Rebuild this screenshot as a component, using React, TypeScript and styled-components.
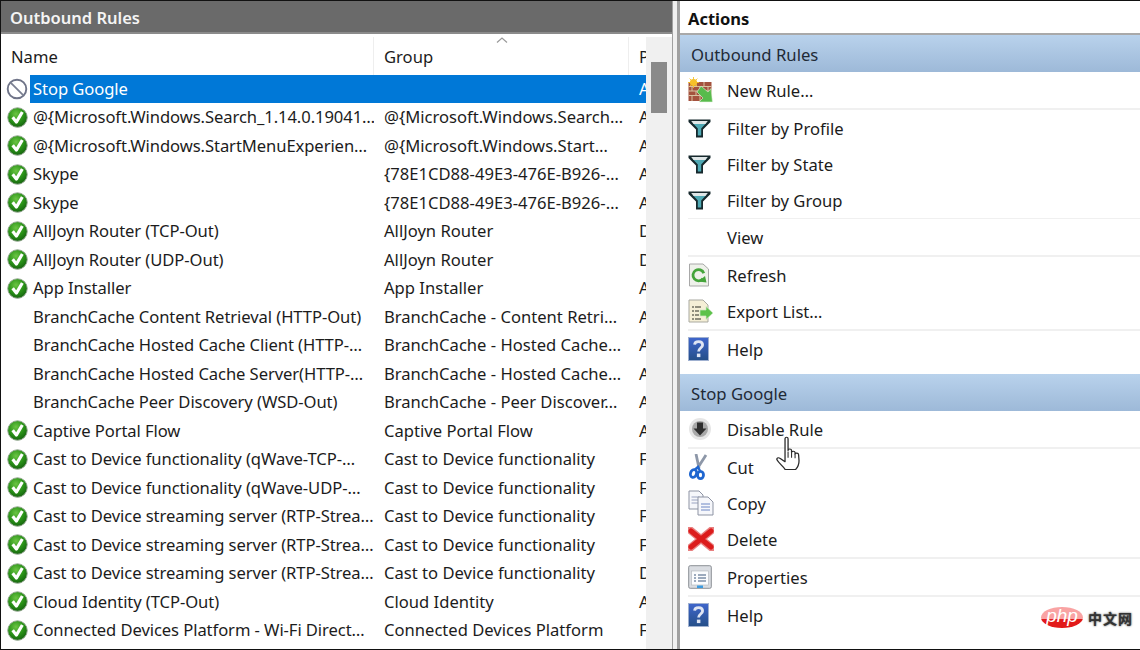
import React from 'react';
import { styled, createGlobalStyle } from 'styled-components';

type Status = 'on' | 'off' | 'none';

interface Rule {
	name: string;
	group: string;
	col: string;
	status: Status;
}

const rules: Rule[] = [
	{ name: 'Stop Google', group: '', col: 'A', status: 'off' },
	{ name: '@{Microsoft.Windows.Search_1.14.0.19041…', group: '@{Microsoft.Windows.Search…', col: 'A', status: 'on' },
	{ name: '@{Microsoft.Windows.StartMenuExperien…', group: '@{Microsoft.Windows.Start…', col: 'A', status: 'on' },
	{ name: 'Skype', group: '{78E1CD88-49E3-476E-B926-…', col: 'A', status: 'on' },
	{ name: 'Skype', group: '{78E1CD88-49E3-476E-B926-…', col: 'A', status: 'on' },
	{ name: 'AllJoyn Router (TCP-Out)', group: 'AllJoyn Router', col: 'D', status: 'on' },
	{ name: 'AllJoyn Router (UDP-Out)', group: 'AllJoyn Router', col: 'D', status: 'on' },
	{ name: 'App Installer', group: 'App Installer', col: 'A', status: 'on' },
	{ name: 'BranchCache Content Retrieval (HTTP-Out)', group: 'BranchCache - Content Retri…', col: 'A', status: 'none' },
	{ name: 'BranchCache Hosted Cache Client (HTTP-…', group: 'BranchCache - Hosted Cache…', col: 'A', status: 'none' },
	{ name: 'BranchCache Hosted Cache Server(HTTP-…', group: 'BranchCache - Hosted Cache…', col: 'A', status: 'none' },
	{ name: 'BranchCache Peer Discovery (WSD-Out)', group: 'BranchCache - Peer Discover…', col: 'A', status: 'none' },
	{ name: 'Captive Portal Flow', group: 'Captive Portal Flow', col: 'A', status: 'on' },
	{ name: 'Cast to Device functionality (qWave-TCP-…', group: 'Cast to Device functionality', col: 'F', status: 'on' },
	{ name: 'Cast to Device functionality (qWave-UDP-…', group: 'Cast to Device functionality', col: 'F', status: 'on' },
	{ name: 'Cast to Device streaming server (RTP-Strea…', group: 'Cast to Device functionality', col: 'F', status: 'on' },
	{ name: 'Cast to Device streaming server (RTP-Strea…', group: 'Cast to Device functionality', col: 'F', status: 'on' },
	{ name: 'Cast to Device streaming server (RTP-Strea…', group: 'Cast to Device functionality', col: 'D', status: 'on' },
	{ name: 'Cloud Identity (TCP-Out)', group: 'Cloud Identity', col: 'A', status: 'on' },
	{ name: 'Connected Devices Platform - Wi-Fi Direct…', group: 'Connected Devices Platform', col: 'F', status: 'on' },
];

function CheckIcon() {
	return (
		<svg width='21' height='21' viewBox='0 0 20 20'>
			<defs>
				<radialGradient id='greenBall' cx='42%' cy='32%' r='72%'>
					<stop offset='0%' stopColor='#6cc544' />
					<stop offset='55%' stopColor='#2a9318' />
					<stop offset='100%' stopColor='#14600e' />
				</radialGradient>
			</defs>
			<circle cx='10' cy='10' r='9.3' fill='url(#greenBall)' stroke='#97a894' strokeWidth='0.9' />
			<path d='M5.4 9.8 L8.9 14.4 L14.6 4.8' fill='none' stroke='#fff' strokeWidth='3' strokeLinejoin='round' />
		</svg>
	);
}

function DisabledIcon() {
	return (
		<svg width='22' height='22' viewBox='0 0 22 22'>
			<circle cx='11' cy='11' r='9.3' fill='#fff' stroke='#6f7488' strokeWidth='1.9' />
			<path d='M4.6 4.6 L17.4 17.4' stroke='#7b8092' strokeWidth='1.8' />
		</svg>
	);
}

function BrickIcon() {
	return (
		<svg width='25' height='26' viewBox='0 0 25 26'>
			<rect x='0.5' y='5' width='23' height='19' fill='#a4523e' />
			<path d='M0.5 9.5h23M0.5 14h23M0.5 18.5h23M8 5v4.5M16 5v4.5M4 9.5v4.5M12 9.5v4.5M20 9.5v4.5M8 14v4.5M16 14v4.5M4 18.5v5.5M12 18.5v5.5' stroke='#d9c2a2' strokeWidth='1' />
			<circle cx='5.5' cy='5.5' r='3.6' fill='#f6c22a' />
			<path d='M5.5 0v11M0 5.5h11M1.6 1.6l7.8 7.8M9.4 1.6l-7.8 7.8' stroke='#f6c22a' strokeWidth='0.9' />
			<path d='M13 9 L20 15 L23 11.5 L24.5 25 L11 25 L15 21 L9 15 Z' fill='#58bb4c' stroke='#e8f5e2' strokeWidth='0.6' />
		</svg>
	);
}

function FunnelIcon() {
	return (
		<svg width='23' height='19' viewBox='0 0 23 19'>
			<path d='M0.5 0.5 H22.5 V3 L15 10.5 V18.5 H8 V10.5 L0.5 3 Z' fill='#16282c' />
			<path d='M4.5 3.8 H18.5 L13.2 9.4 V16.6 H9.8 V9.4 Z' fill='#4fa9b4' />
			<path d='M3.2 2 H19.8 L17.4 5 H5.6 Z' fill='#dfe6e7' />
		</svg>
	);
}

function RefreshIcon() {
	return (
		<svg width='22' height='24' viewBox='0 0 22 24'>
			<path d='M1.5 1 H15 L20.5 6 V23 H1.5 Z' fill='#eef1ea' stroke='#a8a8a8' />
			<path d='M15 15.6 A5.6 5.6 0 1 1 15.8 10.2' fill='none' stroke='#44a43a' strokeWidth='2.8' />
			<path d='M10.5 18.5 L18.5 19.5 L17 13 Z' fill='#44a43a' />
		</svg>
	);
}

function ExportIcon() {
	return (
		<svg width='26' height='26' viewBox='0 0 26 26'>
			<path d='M1 2 H15 L20 7 V24 H1 Z' fill='#f5efd6' stroke='#a9a9a0' />
			<path d='M4 9h9M4 13h7M4 17h7M4 21h9' stroke='#6f6f60' strokeWidth='1.4' strokeDasharray='2 1 6 0' />
			<path d='M12 12 H18 V8.5 L25 15 L18 21.5 V18 H12 Z' fill='#5cc24a' stroke='#cfe8c6' strokeWidth='0.7' />
		</svg>
	);
}

function HelpIcon() {
	return (
		<svg width='21' height='24' viewBox='0 0 21 24'>
			<defs>
				<linearGradient id='helpBlue' x1='0' y1='0' x2='0' y2='1'>
					<stop offset='0%' stopColor='#3f66cc' />
					<stop offset='100%' stopColor='#254f88' />
				</linearGradient>
			</defs>
			<rect x='0.5' y='0.5' width='20' height='23' fill='url(#helpBlue)' stroke='#9fb0d0' />
			<path d='M6.6 7.6 C6.8 3.6 14.6 3.4 14.6 8 C14.6 11 10.6 11 10.6 14.4' fill='none' stroke='#dfe5f3' strokeWidth='2.8' />
			<rect x='8.9' y='16.6' width='3.5' height='3.5' fill='#dfe5f3' />
		</svg>
	);
}

function DisableIcon() {
	return (
		<svg width='24' height='24' viewBox='0 0 24 24'>
			<circle cx='12' cy='12' r='11' fill='#e6e6e6' />
			<circle cx='12' cy='12' r='8' fill='#a8a8a8' />
			<path d='M9 5.5 H15 V11.5 H18.5 L12 18.5 L5.5 11.5 H9 Z' fill='#2e2e2e' />
		</svg>
	);
}

function CutIcon() {
	return (
		<svg width='20' height='26' viewBox='0 0 20 26'>
			<path d='M8 0 L11 14 M18 1 L9 15' stroke='#8d97a8' strokeWidth='2.8' />
			<ellipse cx='5.5' cy='19.5' rx='3' ry='4' fill='none' stroke='#1f66d0' strokeWidth='2.8' transform='rotate(20 5.5 19.5)' />
			<ellipse cx='12.5' cy='21' rx='3' ry='3.6' fill='none' stroke='#1f66d0' strokeWidth='2.8' />
			<path d='M7 15.5 L10 13 L12 17' stroke='#1f66d0' strokeWidth='2.4' fill='none' />
		</svg>
	);
}

function CopyIcon() {
	return (
		<svg width='26' height='26' viewBox='0 0 26 26'>
			<path d='M1 1 H11 L15 5 V19 H1 Z' fill='#f6f7fb' stroke='#8d93a3' />
			<path d='M3.5 7h8M3.5 10h8M3.5 13h8' stroke='#9aa3c0' />
			<path d='M10 7 H20 L25 12 V25 H10 Z' fill='#f6f7fb' stroke='#8d93a3' />
			<path d='M13 14h9M13 17h9M13 20h9' stroke='#6c86c4' />
		</svg>
	);
}

function DeleteIcon() {
	return (
		<svg width='26' height='24' viewBox='0 0 26 24'>
			<path d='M2 3 L24 21 M24 3 L2 21' stroke='#e88080' strokeWidth='7.6' strokeLinecap='round' />
			<path d='M3 4 L23 20 M23 4 L3 20' stroke='#dc1c1c' strokeWidth='5' strokeLinecap='round' />
		</svg>
	);
}

function PropertiesIcon() {
	return (
		<svg width='24' height='24' viewBox='0 0 24 24'>
			<rect x='0.7' y='0.7' width='22.6' height='22.6' rx='1.5' fill='#dadde2' stroke='#8c9096' />
			<rect x='3.5' y='6' width='17' height='14' fill='#fbfcfe' stroke='#b0b4ba' strokeWidth='0.6' />
			<path d='M6 10h2M6 13h2M6 16h2M10 10h8M10 13h8M10 16h8' stroke='#7d8ea8' strokeWidth='1.4' />
			<rect x='9' y='20.5' width='6' height='2.5' fill='#3d9be0' />
		</svg>
	);
}

function HandCursor() {
	return (
		<svg width='28' height='34' viewBox='0 0 24 33' preserveAspectRatio='none'>
			<path
				d='M8.6 2.6 C8.6 0.8 11.2 0.8 11.2 2.6 V14 C11.4 12.2 14 12.2 14.2 14 V16 C14.4 14.4 17 14.4 17.2 16 V17.6 C17.6 16.2 20 16.4 20.2 18 L20.6 24 C20.6 28 19 31 17.6 32.6 H8.8 C6.6 29 3.4 26.6 1.8 23.4 C1 21.6 2.8 20.4 4.2 21.6 L8.6 25 Z'
				fill='#fff'
				stroke='#2a2a2a'
				strokeWidth='1.1'
				strokeLinejoin='round'
			/>
			<path d='M11.2 15v6M14.2 16v5M17.2 17.6v4' stroke='#2a2a2a' strokeWidth='0.9' />
		</svg>
	);
}

function App() {
	return (
		<>
			<GlobalStyle />
			<Frame>
				<RulesPane>
					<TitleBar>Outbound Rules</TitleBar>
					<TableArea>
						<Table>
							<HeaderRow>
								<HeaderCell>Name</HeaderCell>
								<HeaderCell>
									<SortCaret width='12' height='6' viewBox='0 0 12 6'>
										<path d='M1 5.5 L6 1 L11 5.5' fill='none' stroke='#9a9a9a' strokeWidth='1.2' />
									</SortCaret>
									Group
								</HeaderCell>
								<ClipHeaderCell>P</ClipHeaderCell>
							</HeaderRow>
							{rules.map((rule, i) => (
								<RuleRow key={i}>
									<IconCell>
										{rule.status === 'on' && <CheckIcon />}
										{rule.status === 'off' && <DisabledIcon />}
									</IconCell>
									<NameCell selected={i === 0}>{rule.name}</NameCell>
									<GroupCell selected={i === 0}>{rule.group}</GroupCell>
									<ClipCell selected={i === 0}>{rule.col}</ClipCell>
								</RuleRow>
							))}
						</Table>
						<ScrollTrack>
							<ScrollThumb />
						</ScrollTrack>
					</TableArea>
				</RulesPane>
				<Splitter />
				<ActionsPane>
					<ActionsTitle>Actions</ActionsTitle>
					<SectionHeader>Outbound Rules</SectionHeader>
					<ActionGroup>
						<ActionItem><ActionIcon><BrickIcon /></ActionIcon>New Rule…</ActionItem>
					</ActionGroup>
					<ActionGroup thin>
						<ActionItem><ActionIcon><FunnelIcon /></ActionIcon>Filter by Profile</ActionItem>
						<ActionItem><ActionIcon><FunnelIcon /></ActionIcon>Filter by State</ActionItem>
						<ActionItem><ActionIcon><FunnelIcon /></ActionIcon>Filter by Group</ActionItem>
					</ActionGroup>
					<ActionGroup>
						<ActionItem><ActionIcon />View</ActionItem>
					</ActionGroup>
					<ActionGroup>
						<ActionItem><ActionIcon><RefreshIcon /></ActionIcon>Refresh</ActionItem>
						<ActionItem><ActionIcon><ExportIcon /></ActionIcon>Export List…</ActionItem>
					</ActionGroup>
					<LastGroup>
						<ActionItem><ActionIcon><HelpIcon /></ActionIcon>Help</ActionItem>
					</LastGroup>
					<SectionHeader>Stop Google</SectionHeader>
					<ActionGroup>
						<ActionItem><ActionIcon><DisableIcon /></ActionIcon>Disable Rule</ActionItem>
					</ActionGroup>
					<ActionGroup>
						<ActionItem><ActionIcon><CutIcon /></ActionIcon>Cut</ActionItem>
						<ActionItem><ActionIcon><CopyIcon /></ActionIcon>Copy</ActionItem>
						<ActionItem><ActionIcon><DeleteIcon /></ActionIcon>Delete</ActionItem>
					</ActionGroup>
					<ActionGroup>
						<ActionItem><ActionIcon><PropertiesIcon /></ActionIcon>Properties</ActionItem>
					</ActionGroup>
					<LastGroup>
						<ActionItem><ActionIcon><HelpIcon /></ActionIcon>Help</ActionItem>
					</LastGroup>
				</ActionsPane>
				<Cursor>
					<HandCursor />
				</Cursor>
				<Watermark>
					<PhpBadge>php</PhpBadge>
					<WatermarkText>中文网</WatermarkText>
				</Watermark>
			</Frame>
		</>
	);
}

export default App;

interface SelectedProps {
	selected?: boolean;
}

interface GroupProps {
	thin?: boolean;
}

const GlobalStyle = createGlobalStyle`
	html, body {
		margin: 0;
		padding: 0;
		background: #fff;
	}
	body {
		font-family: 'Noto Sans', 'Open Sans', sans-serif;
		color: #1c1c1c;
	}
`;

const Frame = styled.div`
	position: relative;
	width: 1140px;
	height: 650px;
	box-sizing: border-box;
	display: flex;
	overflow: hidden;
	background: #fff;
	border-top: 1px solid #111;
	border-left: 1px solid #111;
	border-bottom: 1px solid #111;
	font-size: 16.6px;
`;

const RulesPane = styled.div`
	width: 671px;
	flex: none;
	display: flex;
	flex-direction: column;
`;

const TitleBar = styled.div`
	height: 33px;
	box-sizing: border-box;
	padding: 1px 0 0 9px;
	display: flex;
	align-items: center;
	background: #6a6a6a;
	color: #f4f4f4;
	font-weight: 600;
	font-size: 16.5px;
	border-bottom: 2px solid #8b8b8b;
`;

const TableArea = styled.div`
	flex: 1;
	display: flex;
	min-height: 0;
	padding-top: 3px;
`;

const Table = styled.div`
	flex: 1;
	min-width: 0;
	overflow: hidden;
`;

const HeaderRow = styled.div`
	height: 37.5px;
	display: grid;
	grid-template-columns: 373px 255px 1fr;
`;

const HeaderCell = styled.div`
	position: relative;
	padding: 2px 0 0 10px;
	display: flex;
	align-items: center;
	border-right: 1px solid #eeeeee;
`;

const ClipHeaderCell = styled(HeaderCell)`
	border-right: none;
	overflow: hidden;
`;

const SortCaret = styled.svg`
	position: absolute;
	left: 122px;
	top: 0;
`;

const RuleRow = styled.div`
	height: 28.5px;
	display: grid;
	grid-template-columns: 29px 344px 255px 1fr;
`;

const IconCell = styled.div`
	display: flex;
	align-items: center;
	justify-content: center;
	padding-left: 3px;
`;

const NameCell = styled.div<SelectedProps>`
	padding-left: 3px;
	line-height: 28.5px;
	letter-spacing: -0.08px;
	white-space: nowrap;
	overflow: hidden;
	background: ${(props) => (props.selected ? '#0078d7' : 'transparent')};
	color: ${(props) => (props.selected ? '#fff' : 'inherit')};
`;

const GroupCell = styled(NameCell)`
	padding-left: 10px;
	letter-spacing: 0;
`;

const ClipCell = styled(GroupCell)`
	padding-left: 10px;
`;

const ScrollTrack = styled.div`
	width: 26px;
	flex: none;
	background: #f0f0f0;
	padding: 25px 5px 0 5px;
	box-sizing: border-box;
`;

const ScrollThumb = styled.div`
	height: 51px;
	background: #8a8a8a;
`;

const Splitter = styled.div`
	width: 8px;
	flex: none;
	box-sizing: border-box;
	background: #f0f0f0;
	border-left: 1px solid #a0a0a0;
	border-right: 3px solid #a0a0a0;
`;

const ActionsPane = styled.div`
	flex: 1;
	display: flex;
	flex-direction: column;
	min-width: 0;
`;

const ActionsTitle = styled.div`
	height: 34px;
	flex: none;
	box-sizing: border-box;
	padding: 3px 0 0 8px;
	display: flex;
	align-items: center;
	font-weight: 700;
	font-size: 16.5px;
	color: #111;
	border-bottom: 2px solid #a9a9a9;
`;

const SectionHeader = styled.div`
	height: 37px;
	flex: none;
	box-sizing: border-box;
	padding: 2px 0 0 11px;
	display: flex;
	align-items: center;
	background: linear-gradient(#b9d2ec, #9db9d8);
	color: #1f2a36;
	font-size: 16.7px;
`;

const ActionGroup = styled.div<GroupProps>`
	margin-left: 8px;
	border-bottom: ${(props) => (props.thin ? '1px' : '2px')} solid #f0f0f0;
`;

const LastGroup = styled.div`
	margin-left: 8px;
	padding-bottom: 7px;
`;

const ActionItem = styled.div`
	height: 36px;
	display: flex;
	align-items: center;
`;

const ActionIcon = styled.span`
	width: 39px;
	flex: none;
	display: flex;
	align-items: center;
`;

const Cursor = styled.div`
	position: absolute;
	left: 774px;
	top: 435px;
	line-height: 0;
`;

const Watermark = styled.div`
	position: absolute;
	left: 1040px;
	top: 606px;
	display: flex;
	align-items: center;
	gap: 5px;
`;

const PhpBadge = styled.div`
	width: 42px;
	height: 21px;
	border-radius: 50%;
	background: linear-gradient(#f9a3a3 0 58%, #e21a1a 58%);
	color: #fff;
	font: italic 400 19px/18px 'Liberation Sans', sans-serif;
	text-align: center;
`;

const WatermarkText = styled.div`
	font: 700 14px/18px 'Noto Sans CJK SC', sans-serif;
	letter-spacing: 1px;
	color: #333;
	text-shadow: 0 0 2px #333;
`;
